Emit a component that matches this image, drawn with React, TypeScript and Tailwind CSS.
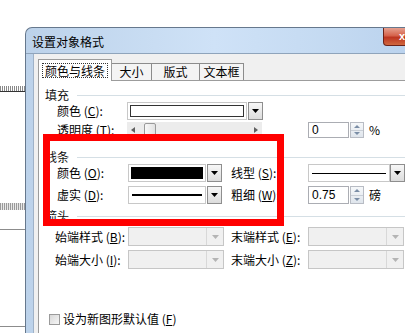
import React from "react";

function Tri({ c = "#000" }: { c?: string }) {
  return (
    <svg width="7" height="4" viewBox="0 0 7 4">
      <path d="M0 0H7L3.5 4Z" fill={c} />
    </svg>
  );
}

function DropBtn() {
  return (
    <div className="w-[15px] h-full shrink-0 flex items-center justify-center border border-[#8e8e8e] bg-[linear-gradient(#f7f7f7,#dcdcdc)]">
      <Tri />
    </div>
  );
}

function Lbl({ t, k, className }: { t: string; k: string; className: string }) {
  return (
    <div className={className}>
      {t} (<span className="underline">{k}</span>):
    </div>
  );
}

function Spin({ value, unit }: { value: string; unit: string }) {
  return (
    <div className="flex h-full items-center">
      <div className="w-[41px] h-full border border-[#abadb3] bg-white flex items-center pl-[3px] text-[12px] leading-none font-['Liberation_Sans',sans-serif]">
        {value}
      </div>
      <div className="w-[14px] h-full ml-[1px] flex flex-col border border-[#b8bcc4] bg-[linear-gradient(#f6f8fa,#dfe5ec)]">
        <div className="flex-1 flex items-center justify-center border-b border-[#c8ced6]">
          <svg width="6" height="3" viewBox="0 0 6 3">
            <path d="M0 3H6L3 0Z" fill="#7a8da6" />
          </svg>
        </div>
        <div className="flex-1 flex items-center justify-center">
          <svg width="6" height="3" viewBox="0 0 6 3">
            <path d="M0 0H6L3 3Z" fill="#7a8da6" />
          </svg>
        </div>
      </div>
      <div className="ml-[5px] text-[12px] leading-none">{unit}</div>
    </div>
  );
}

function Header({ t }: { t: string }) {
  return (
    <div className="h-[12px] flex items-center pl-[6px]">
      <div className="text-[12px] leading-[12px] text-[#111]">{t}</div>
      <div className="flex-1 h-px bg-[#d5dfe5] ml-[8px]" />
    </div>
  );
}

function DisabledCombo() {
  return (
    <div className="w-[96px] h-full flex border border-[#c6c6c6] bg-[#f0f0f0]">
      <div className="flex-1" />
      <div className="w-[17px] h-full flex items-center justify-center border-l border-[#d8d8d8]">
        <Tri c="#b4b4b4" />
      </div>
    </div>
  );
}

export default function App() {
  return (
    <div className="relative w-[405px] h-[333px] overflow-hidden bg-white flex font-['Noto_Sans_CJK_SC',sans-serif] text-black">
      {/* document behind */}
      <div className="w-[25px] shrink-0 flex flex-col">
        <div className="h-[86px]" />
        <div className="h-[6px] border-b border-[#333] bg-[repeating-linear-gradient(90deg,#8a8a8a_0px,#8a8a8a_1px,#ffffff_1px,#ffffff_2px)]" />
        <div className="h-[111px]" />
        <div className="h-[7px] bg-[repeating-linear-gradient(90deg,#9a9a9a_0px,#9a9a9a_1px,#e8e8e8_1px,#e8e8e8_2px)]" />
        <div className="h-[19px]" />
        <div className="h-[98px] border-t border-b border-[#8c8c8c]" />
      </div>

      {/* dialog */}
      <div className="w-[420px] shrink-0 mt-[27px] h-[330px] flex flex-col border-l border-t border-[#66788d] rounded-tl-[7px] bg-[linear-gradient(90deg,#bcd2ea,#cfe2f7_45%,#c3d9f1_75%,#b6cfec)]">
        <div className="h-[26px] flex items-start border-b border-[#8fa4bb]">
          <div className="pl-[6px] pt-[8px] text-[12px] leading-[12px]">设置对象格式</div>
          <div className="ml-auto mr-[19px] w-[43px] h-[18px] rounded-b-[4px] border border-[#6b2219] border-t-0 bg-[linear-gradient(#e6a08f,#d5624b_45%,#bd3521_55%,#d0683f)] flex items-center pl-[15px] text-white text-[11px] font-bold leading-none font-['Liberation_Sans',sans-serif]">
            x
          </div>
        </div>
        <div className="flex-1 flex pl-[7px]">
          <div className="flex-1 flex flex-col bg-[#f0f0f0] border-l border-[#9fb2c8] pl-[4px] pt-[5px]">
            {/* tabs */}
            <div className="h-[21px] flex items-end">
              <div className="relative z-10 w-[74px] h-[22px] -mb-px bg-white border border-b-0 border-[#9c9c9c] flex items-center justify-center">
                <div className="px-[2px] border border-dotted border-[#333] text-[12px] leading-[13px]">颜色与线条</div>
              </div>
              <div className="w-[40px] h-[17px] bg-[#f4f4f4] border-t border-r border-[#8c8c8c] flex items-center justify-center text-[12px] leading-none">
                大小
              </div>
              <div className="w-[48px] h-[17px] bg-[#f4f4f4] border-t border-r border-[#8c8c8c] flex items-center justify-center text-[12px] leading-none">
                版式
              </div>
              <div className="w-[44px] h-[17px] bg-[#f4f4f4] border-t border-r border-[#8c8c8c] flex items-center justify-center text-[12px] leading-none">
                文本框
              </div>
            </div>
            {/* panel */}
            <div className="flex-1 bg-white border-l border-t border-[#9c9c9c] flex flex-col">
              <div className="mt-[8px]">
                <Header t="填充" />
              </div>
              <div className="mt-[1px] h-[18px] flex items-center">
                <Lbl t="颜色" k="C" className="ml-[18px] w-[70px] text-[12px] leading-none" />
                <div className="w-[120px] h-full border border-[#c8c8c8] p-[2px] bg-white">
                  <div className="w-full h-full border border-[#333] bg-white" />
                </div>
                <div className="ml-[1px] h-full">
                  <DropBtn />
                </div>
              </div>
              <div className="mt-[2px] h-[16px] flex items-center">
                <Lbl t="透明度" k="T" className="ml-[18px] w-[70px] text-[12px] leading-none" />
                <div className="w-[135px] h-full bg-[#ececec] flex items-center px-[4px]">
                  <svg width="4" height="6" viewBox="0 0 4 6">
                    <path d="M4 0V6L0 3Z" fill="#606060" />
                  </svg>
                  <div className="ml-[9px] w-[12px] h-[14px] border border-[#9a9a9a] rounded-[2px] bg-[linear-gradient(90deg,#f8f8f8,#e2e2e2)]" />
                  <div className="flex-1" />
                  <svg width="4" height="6" viewBox="0 0 4 6">
                    <path d="M0 0V6L4 3Z" fill="#606060" />
                  </svg>
                </div>
                <div className="ml-[46px] h-full">
                  <Spin value="0" unit="%" />
                </div>
              </div>

              <div className="mt-[13px]">
                <Header t="线条" />
              </div>
              <div className="mt-[1px] h-[18px] flex items-center">
                <Lbl t="颜色" k="O" className="ml-[18px] w-[71px] text-[12px] leading-none" />
                <div className="w-[78px] h-full border border-[#c8c8c8] p-[2px] bg-white">
                  <div className="w-full h-full bg-black" />
                </div>
                <div className="ml-[1px] h-full">
                  <DropBtn />
                </div>
                <Lbl t="线型" k="S" className="ml-[9px] w-[77px] text-[12px] leading-none" />
                <div className="w-[82px] h-full border border-[#c8c8c8] bg-white flex items-center px-[3px]">
                  <div className="w-full h-px bg-black" />
                </div>
                <div className="h-full">
                  <DropBtn />
                </div>
              </div>
              <div className="mt-[4px] h-[18px] flex items-center">
                <Lbl t="虚实" k="D" className="ml-[18px] w-[71px] text-[12px] leading-none" />
                <div className="w-[78px] h-full border border-[#c8c8c8] bg-white flex items-center px-[3px]">
                  <div className="w-full h-[2px] bg-black" />
                </div>
                <div className="ml-[1px] h-full">
                  <DropBtn />
                </div>
                <Lbl t="粗细" k="W" className="ml-[9px] w-[77px] text-[12px] leading-none" />
                <div className="h-full">
                  <Spin value="0.75" unit="磅" />
                </div>
              </div>

              <div className="mt-[6px]">
                <Header t="箭头" />
              </div>
              <div className="mt-[5px] h-[19px] flex items-center">
                <Lbl t="始端样式" k="B" className="ml-[16px] w-[73px] text-[12px] leading-none" />
                <DisabledCombo />
                <Lbl t="末端样式" k="E" className="ml-[7px] w-[77px] text-[12px] leading-none" />
                <DisabledCombo />
              </div>
              <div className="mt-[4px] h-[19px] flex items-center">
                <Lbl t="始端大小" k="I" className="ml-[16px] w-[73px] text-[12px] leading-none" />
                <DisabledCombo />
                <Lbl t="末端大小" k="Z" className="ml-[7px] w-[77px] text-[12px] leading-none" />
                <DisabledCombo />
              </div>

              <div className="mt-[44px] h-[12px] flex items-center ml-[10px]">
                <div className="w-[11px] h-[11px] border border-[#9a9a9a] bg-[linear-gradient(135deg,#d8d8d8,#f6f6f6)]" />
                <div className="ml-[3px] text-[12px] leading-none">
                  设为新图形默认值 (<span className="underline">F</span>)
                </div>
              </div>
            </div>
          </div>
        </div>
      </div>

      {/* red highlight */}
      <div className="absolute left-[43px] top-[134px] w-[241px] h-[92px] border-[7px] border-[#ff0000]" />
    </div>
  );
}
